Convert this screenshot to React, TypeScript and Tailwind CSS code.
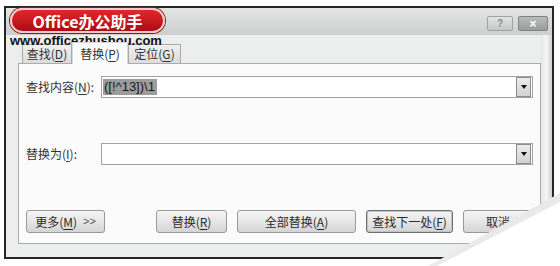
import React from 'react';

const U = ({ c }: { c: string }) => <span className="underline underline-offset-2">{c}</span>;

const Btn = ({ w, children, strong }: { w: string; children: React.ReactNode; strong?: boolean }) => (
  <button
    className={`${w} h-[23px] rounded-[3px] border ${strong ? 'border-[#6f6f6f] shadow-[inset_0_0_0_1px_#bfc4c4]' : 'border-[#9a9a9a]'} bg-gradient-to-b from-[#f4f4f4] via-[#e6e6e6] to-[#d4d4d4] text-[12px] text-[#2b2b2b] flex items-center justify-center`}
  >
    {children}
  </button>
);

const Arrow = () => (
  <div className="w-[15px] h-[20px] border border-[#8c8c8c] bg-gradient-to-b from-[#ececec] to-[#d2d2d2] flex items-center justify-center">
    <div className="w-0 h-0 border-l-[3.5px] border-r-[3.5px] border-t-[4px] border-l-transparent border-r-transparent border-t-[#111]" />
  </div>
);

export default function App() {
  return (
    <div className="relative w-[560px] h-[266px] bg-white overflow-hidden pt-[6px] pl-[4px] font-['Noto_Sans_CJK_SC','Liberation_Sans',sans-serif]">
      {/* dialog */}
      <div className="w-[550px] h-[253px] border-2 border-[#262626] flex flex-col bg-[#eceeed]">
        {/* title bar */}
        <div className="h-[27px] bg-gradient-to-b from-[#e4e6e5] to-[#cdcfce] flex justify-end items-start pt-[8px] pr-[4px] gap-[5px]">
          <div className="w-[26px] h-[15px] rounded-[2px] border border-[#a0a3a2] bg-gradient-to-b from-[#e4e6e5] to-[#c4c7c6] flex items-center justify-center text-[10px] font-bold leading-none text-[#8a8d8c] font-['Liberation_Sans',sans-serif]">
            ?
          </div>
          <div className="w-[30px] h-[15px] rounded-[2px] border border-[#7f8281] bg-gradient-to-b from-[#b9bcbb] to-[#9a9d9c] flex items-center justify-center text-[12px] font-bold leading-none text-white font-['Liberation_Sans',sans-serif]">
            ×
          </div>
        </div>

        {/* body */}
        <div className="flex-1 flex pl-[12px]">
          <div className="w-[523px] flex flex-col">
            {/* tabs */}
            <div className="h-[28px] flex items-end pl-[4px] text-[12px] text-[#333]">
              <div className="w-[50px] h-[19px] border border-b-0 border-[#a9a9a9] bg-gradient-to-b from-[#f0f0f0] to-[#dcdcdc] flex items-center justify-center">
                查找(<U c="D" />)
              </div>
              <div className="w-[56px] h-[22px] -mb-px relative z-10 border border-b-0 border-[#d8d8d8] bg-[#fbfbfb] flex items-center justify-center">
                替换(<U c="P" />)
              </div>
              <div className="w-[53px] h-[19px] border border-b-0 border-[#a9a9a9] bg-gradient-to-b from-[#f0f0f0] to-[#dcdcdc] flex items-center justify-center">
                定位(<U c="G" />)
              </div>
            </div>

            {/* panel */}
            <div className="h-[181px] border border-[#acacac] bg-[#fbfbfb] flex flex-col pl-[7px] pr-[7px] text-[12px] text-[#333]">
              <div className="mt-[12px] flex items-center h-[22px]">
                <div className="w-[75px]">
                  查找内容(<U c="N" />):
                </div>
                <div className="flex-1 h-[22px] border border-[#a3a3a3] bg-white flex items-center justify-between pl-[1px] pr-px">
                  <span className="bg-[#9c9c9c] text-[#1a1a1a] px-px h-[16px] leading-[16px] font-['Liberation_Sans',sans-serif] text-[13px] w-[54px]">
                    ([!^13])\1
                  </span>
                  <Arrow />
                </div>
              </div>

              <div className="mt-[45px] flex items-center h-[22px]">
                <div className="w-[75px]">
                  替换为(<U c="I" />):
                </div>
                <div className="flex-1 h-[22px] border border-[#a3a3a3] bg-white flex items-center justify-end pr-px">
                  <Arrow />
                </div>
              </div>

              <div className="mt-[45px] flex items-center">
                <Btn w="w-[79px]">
                  <span className="mr-[6px]">
                    更多(<U c="M" />)
                  </span>
                  <span className="font-['Liberation_Sans',sans-serif] text-[11px] text-[#555]">&gt;&gt;</span>
                </Btn>
                <div className="ml-auto flex gap-[10px]">
                  <Btn w="w-[71px]">
                    替换(<U c="R" />)
                  </Btn>
                  <Btn w="w-[119px]">
                    全部替换(<U c="A" />)
                  </Btn>
                  <Btn w="w-[87px]" strong>
                    查找下一处(<U c="F" />)
                  </Btn>
                  <Btn w="w-[70px]">取消</Btn>
                </div>
              </div>
            </div>
          </div>
          {/* right frame stripe */}
          <div className="flex-1 bg-gradient-to-r from-[#e4e6e5] via-[#f6f7f7] to-[#cfd1d0]" />
        </div>
      </div>

      {/* watermark logo */}
      <div className="absolute left-[10px] top-[8px] w-[155px] h-[25px] rounded-full border-2 border-[#f3c9c9] bg-gradient-to-b from-[#e5262c] to-[#a90d12] shadow-[0_0_0_1px_#8a1a1a] flex items-center justify-center text-white font-bold text-[16px] leading-none font-['Noto_Sans_CJK_SC',sans-serif]">
        Office办公助手
      </div>
      <div className="absolute left-[10px] top-[34px] text-[13px] font-bold text-[#111] leading-none font-['Liberation_Sans',sans-serif]">
        www.officezhushou.com
      </div>

      {/* page curl */}
      <div className="absolute inset-0 bg-gradient-to-tl from-[#f0f0f0] to-[#bdbdbd] [clip-path:polygon(428px_266px,560px_266px,560px_193px)]" />
      <div className="absolute inset-0 bg-white [clip-path:polygon(437px_266px,560px_266px,560px_202px)]" />
    </div>
  );
}
